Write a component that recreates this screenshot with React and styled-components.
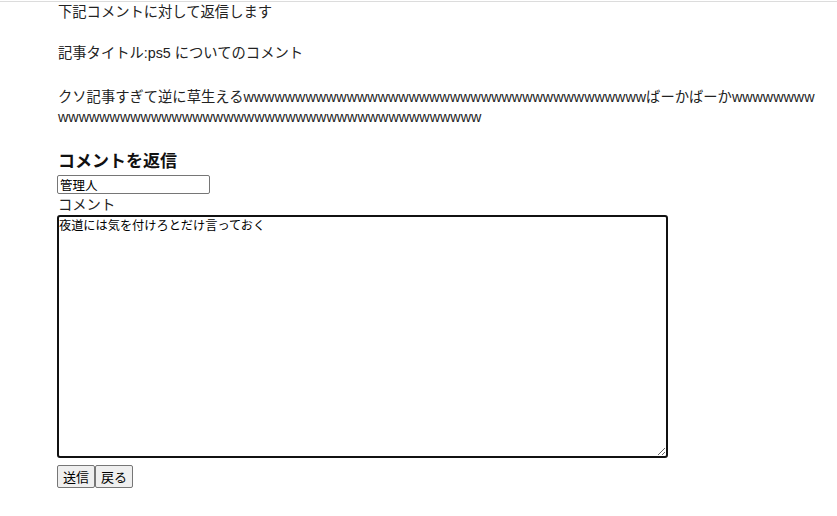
import React from "react";
import styled, { createGlobalStyle } from "styled-components";

const GlobalStyle = createGlobalStyle`
  html, body {
    margin: 0;
    padding: 0;
    background: #fff;
  }
  body {
    font-family: "Liberation Sans", "Noto Sans CJK JP", sans-serif;
    font-size: 14.3px;
    color: #222;
  }
`;

const TopRule = styled.div`
  margin-top: 1px;
  height: 1px;
  background: #dcdcdc;
`;

const Page = styled.div`
  padding: 0 22px 0 58px;
`;

const Line = styled.p`
  margin: 0;
  line-height: 20px;
  height: ${(p) => p.$h || 20}px;
`;

const CommentBody = styled.p`
  margin: 0;
  line-height: 20px;
  word-break: break-all;
`;

const Heading = styled.h3`
  margin: 22px 0 4px;
  font-family: "Noto Sans CJK JP", sans-serif;
  font-size: 17px;
  line-height: 22px;
  font-weight: bold;
  color: #111;
`;

const Form = styled.form`
  display: flex;
  flex-direction: column;
  align-items: flex-start;
`;

const NameInput = styled.input`
  box-sizing: border-box;
  width: 153px;
  height: 19px;
  margin: 0 0 0 -1px;
  padding: 0 2px;
  border: 1px solid #767676;
  border-radius: 2px;
  font-family: "Noto Sans CJK JP", sans-serif;
  font-size: 12.5px;
  color: #000;
`;

const Label = styled.label`
  line-height: 20px;
  font-family: "Noto Sans CJK JP", sans-serif;
`;

const Textarea = styled.textarea`
  box-sizing: border-box;
  width: 611px;
  height: 243px;
  margin: 1px 0 0 -1px;
  padding: 1px 0 0;
  border: 2px solid #111;
  border-radius: 3px;
  font-family: "Noto Sans CJK JP", sans-serif;
  font-size: 12.2px;
  line-height: 14px;
  color: #000;
  outline: none;
  resize: both;
`;

const Buttons = styled.div`
  display: flex;
  margin: 7px 0 0 -1px;
`;

const Button = styled.button`
  box-sizing: border-box;
  height: 23px;
  padding: 0 5px;
  border: 1px solid #767676;
  border-radius: 2px;
  background: #efefef;
  font-family: "Noto Sans CJK JP", sans-serif;
  font-size: 13px;
  color: #000;
`;

const LAUGH = "w".repeat(39);
const TAIL = "w".repeat(8 + 41);

export default function App() {
  return (
    <>
      <GlobalStyle />
      <TopRule />
      <Page>
        <Line $h={41}>下記コメントに対して返信します</Line>
        <Line $h={44}>記事タイトル:ps5 についてのコメント</Line>
        <CommentBody>
          {`クソ記事すぎて逆に草生える${LAUGH}ばーかばーか${TAIL}`}
        </CommentBody>
        <Heading>コメントを返信</Heading>
        <Form onSubmit={(e) => e.preventDefault()}>
          <NameInput defaultValue="管理人" />
          <Label>コメント</Label>
          <Textarea defaultValue="夜道には気を付けろとだけ言っておく" />
          <Buttons>
            <Button type="submit">送信</Button>
            <Button type="button">戻る</Button>
          </Buttons>
        </Form>
      </Page>
    </>
  );
}
